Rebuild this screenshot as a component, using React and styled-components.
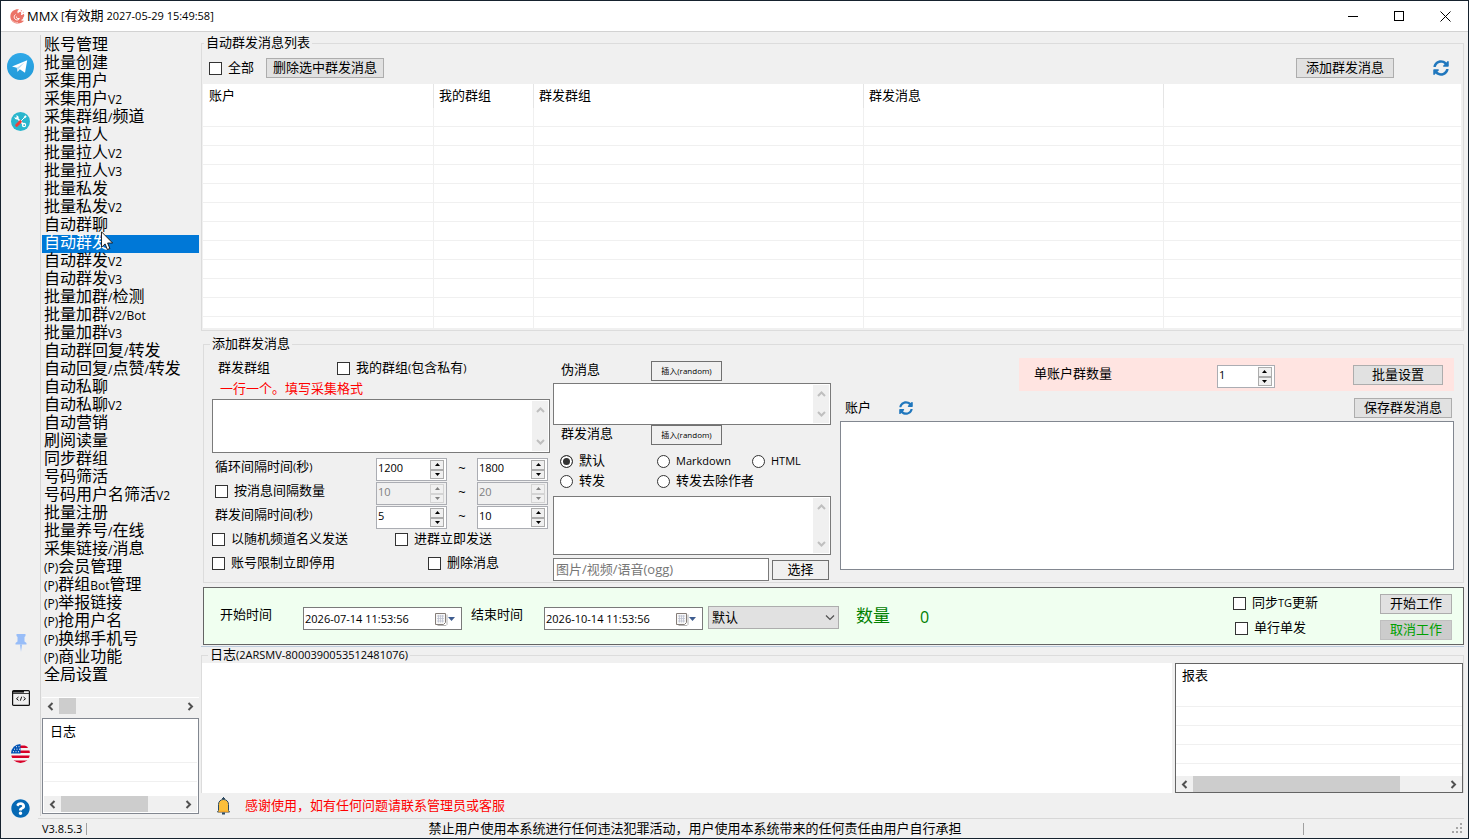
import React, { useState } from 'react';
import styled, { createGlobalStyle } from 'styled-components';
import { FaQuestionCircle, FaSyncAlt } from 'react-icons/fa';

const menu = [
  '账号管理',
  '批量创建',
  '采集用户',
  '采集用户V2',
  '采集群组/频道',
  '批量拉人',
  '批量拉人V2',
  '批量拉人V3',
  '批量私发',
  '批量私发V2',
  '自动群聊',
  '自动群发',
  '自动群发V2',
  '自动群发V3',
  '批量加群/检测',
  '批量加群V2/Bot',
  '批量加群V3',
  '自动群回复/转发',
  '自动回复/点赞/转发',
  '自动私聊',
  '自动私聊V2',
  '自动营销',
  '刷阅读量',
  '同步群组',
  '号码筛活',
  '号码用户名筛活V2',
  '批量注册',
  '批量养号/在线',
  '采集链接/消息',
  '(P)会员管理',
  '(P)群组Bot管理',
  '(P)举报链接',
  '(P)抢用户名',
  '(P)换绑手机号',
  '(P)商业功能',
  '全局设置',
];

// Latin runs are set in their own face, a little smaller than the Chinese text
function Mixed({ children }) {
  return children
    .split(/([\x20-\x7e]+)/)
    .filter(Boolean)
    .map((part, i) =>
      /^[\x20-\x7e]/.test(part) ? <Latin key={i}>{part}</Latin> : part
    );
}

function Check({ id, children, indent }) {
  return (
    <Option $indent={indent} htmlFor={id}>
      <Box type="checkbox" id={id} />
      <span>
        <Mixed>{children}</Mixed>
      </span>
    </Option>
  );
}

function Choice({ id, children, value, onChange }) {
  return (
    <Option htmlFor={id}>
      <Dot
        type="radio"
        name="mode"
        id={id}
        checked={value === id}
        onChange={() => onChange(id)}
      />
      <span>
        <Mixed>{children}</Mixed>
      </span>
    </Option>
  );
}

function Spinner({ label, value, disabled, $narrow }) {
  const [count, setCount] = useState(value);
  return (
    <SpinFrame $narrow={$narrow} $disabled={disabled}>
      <SpinInput
        type="text"
        aria-label={label}
        value={count}
        disabled={disabled}
        onChange={(e) => setCount(e.target.value)}
      />
      <SpinButtons>
        <SpinButton
          type="button"
          aria-label={`${label} +`}
          disabled={disabled}
          onClick={() => setCount(Number(count) + 1)}
        >
          <svg width="5" height="3" viewBox="0 0 5 3">
            <path d="M2.500 0L5 3H0z" fill="currentColor" />
          </svg>
        </SpinButton>
        <SpinButton
          type="button"
          aria-label={`${label} -`}
          disabled={disabled}
          onClick={() => setCount(Number(count) - 1)}
        >
          <svg width="5" height="3" viewBox="0 0 5 3">
            <path d="M0 0h5L2.500 3z" fill="currentColor" />
          </svg>
        </SpinButton>
      </SpinButtons>
    </SpinFrame>
  );
}

function Memo({ label, height }) {
  return (
    <MemoFrame $height={height}>
      <MemoInput aria-label={label} />
      <MemoBar>
        <svg width="9" height="6" viewBox="0 0 9 6" fill="none">
          <path d="M1 5l3.500-3.500L8 5" stroke="#bfbfbf" strokeWidth="2" />
        </svg>
        <svg width="9" height="6" viewBox="0 0 9 6" fill="none">
          <path d="M1 1l3.500 3.500L8 1" stroke="#bfbfbf" strokeWidth="2" />
        </svg>
      </MemoBar>
    </MemoFrame>
  );
}

function HorizontalBar({ thumb }) {
  return (
    <BarTrack>
      <BarArrow type="button" aria-label="left">
        <svg width="7" height="9" viewBox="0 0 7 9" fill="none">
          <path d="M5.500 1L2 4.500 5.500 8" stroke="#505050" strokeWidth="2" />
        </svg>
      </BarArrow>
      <BarThumb $size={thumb} />
      <BarSpace />
      <BarArrow type="button" aria-label="right">
        <svg width="7" height="9" viewBox="0 0 7 9" fill="none">
          <path d="M1.500 1L5 4.500 1.500 8" stroke="#505050" strokeWidth="2" />
        </svg>
      </BarArrow>
    </BarTrack>
  );
}

function DateField({ id, value }) {
  return (
    <DateFrame>
      <DateInput id={id} type="text" defaultValue={value} />
      <DateButton type="button" aria-label="calendar">
        <svg width="22" height="14" viewBox="0 0 22 14">
          <path d="M2.500 13.500h8.500l1-1v-10" fill="none" stroke="#b5b5b5" />
          <path d="M.5 1.500h10v9l-2 2h-8z" fill="#f7f7f7" stroke="#857d78" />
          <path
            d="M2 4h7M2 6.500h7M2 9h7M3.500 3v7.500M5.500 3v7.500M7.500 3v7.500"
            fill="none"
            stroke="#bcc1d0"
            strokeWidth=".8"
          />
          <path d="M13 5h7l-3.500 4z" fill="#3e5c8f" />
        </svg>
      </DateButton>
    </DateFrame>
  );
}

function LogoIcon() {
  return (
    <svg width="15" height="15" viewBox="0 0 15 15">
      <path
        d="M9 .5C5.500-.2 1 2 .4 6.500c-.5 4 2.400 7.500 6.400 7.900 3 .3 6-.9 7.400-2.900-1.400.4-2.600.2-3.300-.5 1.500-.3 2.500-1.200 2.300-2.600 1.300-.6 1.400-2.600.3-3.700-.7 1-1.500 1.300-2.600 1.200.5-1.200.6-2.300-.3-3.100-1 .2-2 .7-2.600 1.800C6.800 3 7.600 1.400 9 .5z"
        fill="#ec7468"
      />
      <path
        d="M5.500 5.500c-2 1.500-1.600 4.500.6 5.300 1.500.5 2.800-.1 3.200-1.400-1.800.6-3-.2-2.800-1.800"
        fill="none"
        stroke="#fff"
        strokeWidth="1"
      />
      <path d="M10.500.8l1.800.7-1 1.200zM13 2.500l1.200 1.200-1.500.3z" fill="#f3a29a" />
      <path d="M2 11.500c1.500 1.500 3.500 2.200 6 2" stroke="#f6b8b1" fill="none" />
    </svg>
  );
}

function TelegramIcon() {
  return (
    <svg width="27" height="27" viewBox="0 0 27 27">
      <defs>
        <linearGradient id="tg" x1="0" y1="0" x2="0" y2="1">
          <stop offset="0" stopColor="#2fa8e8" />
          <stop offset="1" stopColor="#239bd8" />
        </linearGradient>
      </defs>
      <circle cx="13.500" cy="13.500" r="13.500" fill="url(#tg)" />
      <path d="M5 13.400L20.200 7.300 18 19.700l-5.200-3.500-2.300 2.600-.7-4.100z" fill="#fff" />
      <path d="M9.800 14.700l7.700-5.100-5.700 6.100-1.300 3.100z" fill="#b9dcf2" />
    </svg>
  );
}

function ToolsIcon() {
  return (
    <svg width="19" height="19" viewBox="0 0 19 19">
      <circle cx="9.500" cy="9.500" r="9.500" fill="#29b6cd" />
      <path d="M6 6l6.500 6.500" stroke="#fff" strokeWidth="1.600" />
      <circle cx="5.600" cy="5.600" r="2" fill="#fff" />
      <path d="M3 3l2.400 2.400" stroke="#29b6cd" strokeWidth="1.500" />
      <circle cx="13" cy="13" r="2.200" fill="#fff" />
      <circle cx="13.200" cy="13.200" r=".9" fill="#29b6cd" />
      <path d="M10 9l4-4" stroke="#fff" strokeWidth="1" />
      <path d="M13.200 5.800l1.800-2" stroke="#fff" strokeWidth="1.800" />
      <path d="M9.300 9.700l-3.600 3.600" stroke="#ee3f3a" strokeWidth="3" strokeLinecap="round" />
    </svg>
  );
}

function PinIcon() {
  return (
    <svg width="12" height="18" viewBox="0 0 12 18">
      <path d="M1.500 0h9v2L9.500 3v4.500L11.500 9v1.500H.5V9L2.500 7.500V3l-1-1z" fill="#98bdf8" />
      <path d="M5 10.500h2L6 18z" fill="#98bdf8" />
    </svg>
  );
}

function CodeIcon() {
  return (
    <svg width="18" height="16" viewBox="0 0 18 16" fill="none" stroke="#111">
      <rect x=".6" y=".6" width="16.800" height="14.800" rx="1" strokeWidth="1.200" />
      <path d="M1 1.800h11" strokeWidth="1.600" />
      <path d="M1 3.500h16" strokeWidth=".8" />
      <path d="M6.500 7L4.500 8.700l2 1.700M11.500 7l2 1.700-2 1.700M9.700 6.700l-1.400 4" />
    </svg>
  );
}

function FlagIcon() {
  return (
    <svg width="19" height="19" viewBox="0 0 19 19">
      <defs>
        <clipPath id="round">
          <circle cx="9.500" cy="9.500" r="9.500" />
        </clipPath>
      </defs>
      <g clipPath="url(#round)">
        <path fill="#f4f4f4" d="M0 0h19v19H0z" />
        <path
          fill="#d80027"
          d="M9 1.500h10V4H9zM9 6.500h10V9H9zM0 11.500h19V14H0zM0 16.500h19V19H0z"
        />
        <path fill="#0052b4" d="M0 0h9.500v9.500H0z" />
        <path
          d="M2 7.700h1M4.500 7.700h1M7 7.700h1M3 5.200h1M5.500 5.200h1M8 5.200h1M5 2.700h1M7.500 2.700h1"
          stroke="#f4f4f4"
        />
      </g>
    </svg>
  );
}

function BellIcon() {
  return (
    <svg width="13" height="18" viewBox="0 0 13 18">
      <path d="M5 1.500h3M6.500 0v3" stroke="#2c4a63" />
      <path
        d="M1.500 13.500V7.500c0-3 2-5 5-5s5 2 5 5v6l1 1.500H.5z"
        fill="#fbbf3a"
        stroke="#2c4a63"
      />
      <path d="M1.500 14.500h10" stroke="#f0a52b" strokeWidth="1.500" />
      <path d="M5 16.500h3" stroke="#2c4a63" strokeWidth="2" />
    </svg>
  );
}

function Pointer() {
  return (
    <PointerSvg width="13" height="20" viewBox="0 0 13 20">
      <path
        d="M.5.800v15.500l3.600-3.400 2.300 5.600 2.500-1-2.300-5.500h5z"
        fill="#fff"
        stroke="#111"
        strokeWidth=".9"
      />
    </PointerSvg>
  );
}

export default function App() {
  const [active, setActive] = useState('自动群发');
  const [mode, setMode] = useState('default');

  return (
    <Window>
      <GlobalStyle />
      <TitleBar>
        <LogoIcon />
        <Brand>MMX</Brand>
        <span>
          <Mixed>[有效期 2027-05-29 15:49:58]</Mixed>
        </span>
        <WindowButtons>
          <WindowButton type="button" aria-label="minimize">
            <svg width="11" height="11" viewBox="0 0 11 11">
              <path d="M0 5.500h10" stroke="#000" />
            </svg>
          </WindowButton>
          <WindowButton type="button" aria-label="maximize">
            <svg width="11" height="11" viewBox="0 0 11 11">
              <rect x=".5" y=".5" width="9" height="9" fill="none" stroke="#000" />
            </svg>
          </WindowButton>
          <WindowButton type="button" aria-label="close">
            <svg width="11" height="11" viewBox="0 0 11 11">
              <path d="M.5.500l10 10M10.500.500l-10 10" stroke="#000" />
            </svg>
          </WindowButton>
        </WindowButtons>
      </TitleBar>

      <Body>
        <Rail>
          <RailGroup>
            <RailButton type="button" aria-label="telegram">
              <TelegramIcon />
            </RailButton>
            <RailButton type="button" aria-label="tools">
              <ToolsIcon />
            </RailButton>
          </RailGroup>
          <RailGroup>
            <RailButton type="button" aria-label="pin">
              <PinIcon />
            </RailButton>
            <RailButton type="button" aria-label="console">
              <CodeIcon />
            </RailButton>
            <RailButton type="button" aria-label="language">
              <FlagIcon />
            </RailButton>
            <RailButton type="button" aria-label="help">
              <HelpBadge>
                <FaQuestionCircle size={19} />
              </HelpBadge>
            </RailButton>
          </RailGroup>
        </Rail>

        <Sidebar>
          <MenuList>
            {menu.map((item) => (
              <MenuItem key={item}>
                <MenuLink
                  href="#"
                  $active={item === active}
                  onClick={() => setActive(item)}
                >
                  <Mixed>{item}</Mixed>
                </MenuLink>
                {item === '自动群发' && <Pointer />}
              </MenuItem>
            ))}
          </MenuList>
          <MenuScroll>
            <HorizontalBar thumb={17} />
          </MenuScroll>
          <SideLog>
            <Grid>
              <thead>
                <tr>
                  <HeadCell>日志</HeadCell>
                </tr>
              </thead>
              <tbody>
                {[0, 1].map((row) => (
                  <tr key={row}>
                    <Cell />
                  </tr>
                ))}
              </tbody>
            </Grid>
            <HorizontalBar thumb={87} />
          </SideLog>
        </Sidebar>

        <Main>
          <ListGroup>
            <Legend>自动群发消息列表</Legend>
            <Toolbar>
              <Check id="all">全部</Check>
              <DeleteButton type="button">删除选中群发消息</DeleteButton>
              <ToolbarEnd>
                <Button type="button">添加群发消息</Button>
                <IconButton type="button" aria-label="refresh list">
                  <FaSyncAlt size={16} color="#2077bd" />
                </IconButton>
              </ToolbarEnd>
            </Toolbar>
            <TableArea>
              <Grid>
                <colgroup>
                  <Column $width={231} />
                  <Column $width={100} />
                  <Column $width={330} />
                  <Column $width={300} />
                  <Column />
                </colgroup>
                <thead>
                  <tr>
                    <HeadCell>账户</HeadCell>
                    <HeadCell>我的群组</HeadCell>
                    <HeadCell>群发群组</HeadCell>
                    <HeadCell>群发消息</HeadCell>
                    <HeadCell />
                  </tr>
                </thead>
                <tbody>
                  {Array.from({ length: 12 }, (_, row) => (
                    <tr key={row}>
                      <Cell />
                      <Cell />
                      <Cell />
                      <Cell />
                      <Cell />
                    </tr>
                  ))}
                </tbody>
              </Grid>
            </TableArea>
          </ListGroup>

          <FormGroup>
            <Legend>添加群发消息</Legend>
            <FormGrid>
              <Targets>
                <TargetHead>
                  <Caption>群发群组</Caption>
                  <Check id="mine">我的群组(包含私有)</Check>
                </TargetHead>
                <Hint>一行一个。填写采集格式</Hint>
                <Memo label="群发群组" height={54} />
                <Intervals>
                  <IntervalRow>
                    <Caption>
                      <Mixed>循环间隔时间(秒)</Mixed>
                    </Caption>
                    <Spinner label="循环最小" value="1200" />
                    <Tilde>~</Tilde>
                    <Spinner label="循环最大" value="1800" />
                  </IntervalRow>
                  <IntervalRow>
                    <Check id="by-message">按消息间隔数量</Check>
                    <Spinner label="数量最小" value="10" disabled />
                    <Tilde>~</Tilde>
                    <Spinner label="数量最大" value="20" disabled />
                  </IntervalRow>
                  <IntervalRow>
                    <Caption>
                      <Mixed>群发间隔时间(秒)</Mixed>
                    </Caption>
                    <Spinner label="群发最小" value="5" />
                    <Tilde>~</Tilde>
                    <Spinner label="群发最大" value="10" />
                  </IntervalRow>
                  <CheckRow $start={183}>
                    <Check id="random-channel">以随机频道名义发送</Check>
                    <Check id="on-join">进群立即发送</Check>
                  </CheckRow>
                  <CheckRow $start={216}>
                    <Check id="stop-limited">账号限制立即停用</Check>
                    <Check id="delete-message">删除消息</Check>
                  </CheckRow>
                </Intervals>
              </Targets>

              <Message>
                <MessageHead>
                  <Caption>伪消息</Caption>
                  <InsertButton type="button">插入(random)</InsertButton>
                </MessageHead>
                <MessageMemo>
                  <Memo label="伪消息" height={42} />
                </MessageMemo>
                <MessageHead>
                  <Caption>群发消息</Caption>
                  <InsertButton type="button">插入(random)</InsertButton>
                </MessageHead>
                <Modes>
                  <Choice id="default" value={mode} onChange={setMode}>
                    默认
                  </Choice>
                  <Choice id="markdown" value={mode} onChange={setMode}>
                    Markdown
                  </Choice>
                  <Choice id="html" value={mode} onChange={setMode}>
                    HTML
                  </Choice>
                  <Choice id="forward" value={mode} onChange={setMode}>
                    转发
                  </Choice>
                  <Choice id="forward-anonymous" value={mode} onChange={setMode}>
                    转发去除作者
                  </Choice>
                </Modes>
                <Memo label="群发消息" height={59} />
                <FileRow>
                  <FileInput
                    type="text"
                    aria-label="图片/视频/语音(ogg)"
                    placeholder="图片/视频/语音(ogg)"
                  />
                  <PickButton type="button">选择</PickButton>
                </FileRow>
              </Message>

              <Accounts>
                <PinkBar>
                  <span>单账户群数量</span>
                  <PinkControls>
                    <Spinner label="单账户群数量" value="1" $narrow />
                    <BatchButton type="button">批量设置</BatchButton>
                  </PinkControls>
                </PinkBar>
                <AccountHead>
                  <span>账户</span>
                  <IconButton type="button" aria-label="refresh accounts">
                    <FaSyncAlt size={14} color="#2077bd" />
                  </IconButton>
                  <SaveButton type="button">保存群发消息</SaveButton>
                </AccountHead>
                <AccountList />
              </Accounts>
            </FormGrid>
          </FormGroup>

          <Schedule>
            <Caption as="label" htmlFor="start">
              开始时间
            </Caption>
            <DateSlot>
              <DateField id="start" value="2026-07-14 11:53:56" />
            </DateSlot>
            <EndLabel htmlFor="end">结束时间</EndLabel>
            <EndSlot>
              <DateField id="end" value="2026-10-14 11:53:56" />
            </EndSlot>
            <SelectFrame>
              <Select aria-label="模式" defaultValue="默认">
                <option>默认</option>
              </Select>
              <SelectArrow width="10" height="6" viewBox="0 0 10 6" fill="none">
                <path d="M1 .5l4 4 4-4" stroke="#505050" strokeWidth="1.200" />
              </SelectArrow>
            </SelectFrame>
            <Total>数量</Total>
            <TotalCount>0</TotalCount>
            <ScheduleEnd>
              <ScheduleChecks>
                <Check id="sync">同步TG更新</Check>
                <Check id="single" indent={2}>
                  单行单发
                </Check>
              </ScheduleChecks>
              <ScheduleButtons>
                <Button type="button">开始工作</Button>
                <CancelButton type="button">取消工作</CancelButton>
              </ScheduleButtons>
            </ScheduleEnd>
          </Schedule>
          <Rule />

          <LogGroup>
            <Legend>
              <Mixed>日志(2ARSMV-8000390053512481076)</Mixed>
            </Legend>
            <LogRow>
              <LogPane />
              <Report>
                <Grid>
                  <thead>
                    <tr>
                      <HeadCell>报表</HeadCell>
                    </tr>
                  </thead>
                  <tbody>
                    {[0, 1, 2, 3].map((row) => (
                      <tr key={row}>
                        <Cell />
                      </tr>
                    ))}
                  </tbody>
                </Grid>
                <HorizontalBar thumb={207} />
              </Report>
            </LogRow>
          </LogGroup>
          <Notice>
            <BellIcon />
            <span>感谢使用，如有任何问题请联系管理员或客服</span>
          </Notice>
        </Main>
      </Body>

      <StatusBar>
        <Version>V3.8.5.3</Version>
        <Disclaimer>
          禁止用户使用本系统进行任何违法犯罪活动，用户使用本系统带来的任何责任由用户自行承担
        </Disclaimer>
        <GripArea>
          <svg width="12" height="12" viewBox="0 0 12 12">
            <path
              d="M8 0h2v2H8zM4 4h2v2H4zM8 4h2v2H8zM0 8h2v2H0zM4 8h2v2H4zM8 8h2v2H8z"
              fill="#a6a6a6"
            />
          </svg>
        </GripArea>
      </StatusBar>
    </Window>
  );
}

const GlobalStyle = createGlobalStyle`
  * {
    box-sizing: border-box;
  }
  body {
    margin: 0;
    background: #f0f0f0;
    color: #000;
    font-family: 'Liberation Sans', 'Noto Sans CJK SC', sans-serif;
    font-size: 13px;
    line-height: 18px;
  }
  button, input, textarea, select {
    margin: 0;
    padding: 0;
    color: inherit;
    font: inherit;
  }
  svg {
    display: block;
    flex: none;
  }
`;
const Latin = styled.span`
  font-family: 'Open Sans', 'Noto Sans', sans-serif;
  font-size: 11px;
  line-height: 1;
`;
const Window = styled.div`
  display: flex;
  flex-direction: column;
  min-width: 1280px;
  min-height: 100vh;
  border: 1px solid #16222e;
  background: #f0f0f0;
`;

const TitleBar = styled.header`
  display: flex;
  align-items: center;
  height: 31px;
  padding-left: 9px;
  border-bottom: 1px solid #d2d2d2;
  background: #fff;
`;
const Brand = styled.span`
  margin: 0 3px 0 2px;
  font-family: 'Open Sans', sans-serif;
`;
const WindowButtons = styled.div`
  display: flex;
  margin-left: auto;
`;
const WindowButton = styled.button`
  display: flex;
  align-items: center;
  justify-content: center;
  width: 46px;
  height: 30px;
  border: 0;
  background: none;
`;

const Body = styled.div`
  display: flex;
  flex: 1;
`;
const Rail = styled.nav`
  display: flex;
  flex-direction: column;
  justify-content: space-between;
  flex: none;
  width: 39px;
  padding-top: 24px;
`;
const RailGroup = styled.div`
  display: flex;
  flex-direction: column;
  align-items: center;
  gap: 35px;
`;
const RailButton = styled.button`
  display: flex;
  align-items: center;
  justify-content: center;
  width: 28px;
  height: 20px;
  border: 0;
  background: none;
`;
const HelpBadge = styled.span`
  border-radius: 50%;
  color: #0669b4;
  background: #fff;
`;

const Sidebar = styled.aside`
  display: flex;
  flex-direction: column;
  flex: none;
  width: 160px;
  margin: 3px 0 2px;
  padding: 2px 1px;
  border-left: 1px solid #d5d5d5;
`;
const MenuList = styled.ul`
  flex: 1;
  margin: 0;
  padding: 0;
  list-style: none;
`;
const MenuItem = styled.li`
  position: relative;
`;
const MenuLink = styled.a`
  display: block;
  height: 18px;
  padding-left: 2px;
  color: ${(props) => (props.$active ? '#fff' : '#000')};
  background: ${(props) => (props.$active ? '#0078d7' : 'none')};
  font-size: 16px;
  line-height: 16px;
  text-decoration: none;
  white-space: nowrap;

  ${Latin} {
    font-size: 12px;
  }
`;
const PointerSvg = styled.svg`
  position: absolute;
  top: -4px;
  left: 59px;
`;
const MenuScroll = styled.div`
  margin-bottom: 4px;
  border-top: 1px solid #fff;
`;
const SideLog = styled.section`
  display: flex;
  flex-direction: column;
  justify-content: space-between;
  height: 96px;
  padding: 1px;
  border: 1px solid #828790;
  background: #fff;
`;

const BarTrack = styled.div`
  display: flex;
  flex: none;
  height: 16px;
  background: #f0f0f0;
`;
const BarArrow = styled.button`
  display: flex;
  align-items: center;
  justify-content: center;
  width: 17px;
  border: 0;
  background: none;
`;
const BarThumb = styled.div`
  width: ${(props) => props.$size}px;
  background: #cdcdcd;
`;
const BarSpace = styled.div`
  flex: 1;
`;

const Grid = styled.table`
  width: 100%;
  table-layout: fixed;
  border-spacing: 0;
`;
const Column = styled.col`
  width: ${(props) => (props.$width ? `${props.$width}px` : 'auto')};
`;
const HeadCell = styled.th`
  height: 24px;
  padding: 0 5px 0 6px;
  border-right: 1px solid #e5e5e5;
  font-weight: 400;
  text-align: left;
  &:not(:first-child) {
    padding-left: 5px;
  }
  &:last-child {
    border-right: 0;
  }
`;
const Cell = styled.td`
  height: 19px;
  padding: 0;
  border-right: 1px solid #f0f0f0;
  border-bottom: 1px solid #f0f0f0;
  &:last-child {
    border-right: 0;
  }
`;

const Main = styled.main`
  display: flex;
  flex-direction: column;
  flex: 1;
  min-width: 0;
  padding: 3px 4px 0 1px;
`;
const Group = styled.fieldset`
  min-width: 0;
  margin: 0;
  padding: 0;
  border: 1px solid #dcdcdc;
`;
const Legend = styled.legend`
  margin-left: 1px;
  padding: 0 2px;
  line-height: 16px;
`;
const ListGroup = styled(Group)`
  padding: 0 1px 2px;
`;
const FormGroup = styled(Group)`
  margin: 5px 0 0 2px;
  padding: 1px 9px 1px 8px;

  ${Legend} {
    margin-left: -2px;
  }
`;
const LogGroup = styled(Group)`
  display: flex;
  flex-direction: column;
  flex: 1;
  border-bottom: 0;

  ${Legend} {
    margin-left: 6px;
  }
`;

const Option = styled.label`
  display: flex;
  align-items: center;
  gap: 6px;
  margin-left: ${(props) => props.$indent || 0}px;
  white-space: nowrap;
`;
const Box = styled.input`
  appearance: none;
  flex: none;
  width: 13px;
  height: 13px;
  border: 1px solid #333;
  background: #fff;
  &:checked {
    box-shadow: inset 0 0 0 2px #fff;
    background: #333;
  }
`;
const Dot = styled(Box)`
  border-radius: 50%;
`;
const Button = styled.button`
  height: 20px;
  padding: 0 9px;
  border: 1px solid #adadad;
  background: #e1e1e1;
  line-height: 18px;
  white-space: nowrap;
`;
const DeleteButton = styled(Button)`
  padding: 0 6px;
`;
const IconButton = styled.button`
  display: flex;
  align-items: center;
  border: 0;
  background: none;
`;

const Toolbar = styled.div`
  display: flex;
  align-items: center;
  gap: 12px;
  height: 33px;
  padding: 1px 0 0 6px;
`;
const ToolbarEnd = styled.div`
  display: flex;
  gap: 39px;
  margin-left: auto;
  padding-right: 13px;
`;
const TableArea = styled.div`
  height: 244px;
  margin-right: 1px;
  overflow: hidden;
  background: #fff;
`;

const FormGrid = styled.div`
  display: grid;
  grid-template-columns: 338px 278px 1fr;
`;
const Caption = styled.span`
  white-space: nowrap;
`;
const Targets = styled.div`
  padding-top: 6px;
`;
const TargetHead = styled.div`
  display: grid;
  grid-template-columns: 119px 1fr;
  padding-left: 6px;
`;
const Hint = styled.div`
  margin: 3px 0 1px;
  padding-left: 8px;
  color: #f00;
`;
const MemoFrame = styled.div`
  display: flex;
  height: ${(props) => props.$height}px;
  padding: 1px;
  border: 1px solid #7a7a7a;
  background: #fff;
`;
const MemoInput = styled.textarea`
  flex: 1;
  min-width: 0;
  border: 0;
  outline: 0;
  resize: none;
  background: none;
`;
const MemoBar = styled.div`
  display: flex;
  flex-direction: column;
  align-items: center;
  justify-content: space-between;
  width: 16px;
  padding: 6px 0;
  background: #f0f0f0;
`;
const Intervals = styled.div`
  padding-top: 5px;
`;
const IntervalRow = styled.div`
  display: grid;
  grid-template-columns: 161px 71px 30px 71px;
  align-items: start;
  height: 24px;
  padding-left: 3px;
`;
const CheckRow = styled.div`
  display: grid;
  grid-template-columns: ${(props) => props.$start}px 1fr;
  align-items: start;
  height: 24px;
`;
const Tilde = styled.span`
  font-family: 'Open Sans', sans-serif;
  line-height: 20px;
  text-align: center;
`;
const SpinFrame = styled.div`
  display: flex;
  width: ${(props) => (props.$narrow ? 58 : 71)}px;
  height: 23px;
  padding: 1px;
  border: 1px solid #abadb3;
  color: ${(props) => (props.$disabled ? '#808080' : '#000')};
  background: ${(props) => (props.$disabled ? '#f0f0f0' : '#fff')};
`;
const SpinInput = styled.input`
  flex: 1;
  min-width: 0;
  height: 15px;
  border: 0;
  outline: 0;
  background: none;
  font-family: 'Open Sans', sans-serif;
  font-size: 11px;
`;
const SpinButtons = styled.div`
  display: flex;
  flex-direction: column;
  width: 14px;
  margin-right: 1px;
`;
const SpinButton = styled.button`
  display: flex;
  flex: 1;
  align-items: center;
  justify-content: center;
  border: 1px solid #acacac;
  background: #f0f0f0;
  &:disabled {
    border-color: #d4d4d4;
  }
`;

const Message = styled.div`
  display: flex;
  flex-direction: column;
  margin: 0 -3px 0 3px;
  padding-top: 8px;
`;
const MessageHead = styled.div`
  display: grid;
  grid-template-columns: 90px 71px;
  height: 20px;
  padding-left: 8px;
`;
const InsertButton = styled.button`
  height: 20px;
  border: 1px solid #707070;
  background: #f0f0f0;
  font-family: 'Open Sans', 'Noto Sans CJK SC', sans-serif;
  font-size: 8px;
`;
const MessageMemo = styled.div`
  padding-top: 2px;
`;
const Modes = styled.div`
  display: grid;
  grid-template-columns: 97px 95px 1fr;
  grid-auto-rows: 20px;
  padding: 6px 0 5px 7px;
`;
const FileRow = styled.div`
  display: grid;
  grid-template-columns: 1fr 57px;
  align-items: center;
  gap: 3px;
  padding: 3px 2px 0 0;
`;
const FileInput = styled.input`
  min-width: 0;
  height: 23px;
  padding: 0 2px 2px;
  border: 1px solid #7a7a7a;
  background: #fff;
  font-family: 'Open Sans', 'Noto Sans CJK SC', sans-serif;
  &::placeholder {
    color: #767676;
  }
`;
const PickButton = styled(Button)`
  border-color: #707070;
  background: #f0f0f0;
`;

const Accounts = styled.div`
  min-width: 0;
  padding: 5px 0 0 12px;
`;
const PinkBar = styled.div`
  display: flex;
  justify-content: space-between;
  width: 435px;
  height: 33px;
  margin-left: auto;
  padding: 7px 11px 0 15px;
  background: #ffe4e1;
`;
const PinkControls = styled.div`
  display: flex;
  gap: 78px;
`;
const BatchButton = styled(Button)`
  padding: 0 18px;
`;
const AccountHead = styled.div`
  display: flex;
  align-items: center;
  gap: 28px;
  margin: 7px 2px 3px 5px;
`;
const SaveButton = styled(Button)`
  margin-left: auto;
`;
const AccountList = styled.div`
  height: 149px;
  border: 1px solid #828790;
  background: #fff;
`;

const Schedule = styled.section`
  display: flex;
  align-items: flex-start;
  height: 58px;
  margin: 4px 0 0 2px;
  padding: 18px 11px 0 16px;
  border: 1px solid #646464;
  background: #f0fff0;
`;
const DateSlot = styled.div`
  margin: 1px 9px 0 31px;
`;
const EndLabel = styled.label`
  white-space: nowrap;
`;
const EndSlot = styled.div`
  margin: 1px 5px 0 21px;
`;
const DateFrame = styled.div`
  display: flex;
  width: 159px;
  height: 23px;
  padding: 1px;
  border: 1px solid #7a7a7a;
  background: #fff;
`;
const DateInput = styled.input`
  flex: 1;
  min-width: 0;
  border: 0;
  outline: 0;
  font-family: 'Open Sans', sans-serif;
  font-size: 11px;
`;
const DateButton = styled.button`
  display: flex;
  align-items: center;
  width: 25px;
  border: 0;
  background: none;
`;
const SelectFrame = styled.div`
  display: grid;
  align-items: center;
  width: 131px;
  height: 23px;
  margin-right: 17px;
`;
const Select = styled.select`
  appearance: none;
  grid-area: 1 / 1;
  width: 100%;
  height: 23px;
  padding: 0 3px;
  border: 1px solid #adadad;
  border-radius: 0;
  background: #e1e1e1;
`;
const SelectArrow = styled.svg`
  grid-area: 1 / 1;
  justify-self: end;
  margin-right: 4px;
  pointer-events: none;
`;
const Total = styled.span`
  margin-right: 30px;
  color: #008000;
  font-size: 17px;
  line-height: 22px;
`;
const TotalCount = styled(Total)`
  font-family: 'Open Sans', sans-serif;
  font-size: 16px;
`;
const ScheduleEnd = styled.div`
  display: flex;
  gap: 62px;
  margin: -12px 0 0 auto;
`;
const ScheduleChecks = styled.div`
  display: flex;
  flex-direction: column;
  gap: 7px;
`;
const ScheduleButtons = styled.div`
  display: flex;
  flex-direction: column;
  gap: 6px;
`;
const CancelButton = styled(Button)`
  border-color: #bfbfbf;
  color: #00a000;
  background: #ccc;
`;
const Rule = styled.div`
  height: 1px;
  margin-top: 1px;
  background: #bccbdc;
`;

const LogRow = styled.div`
  display: flex;
  flex: 1;
  gap: 3px;
`;
const LogPane = styled.div`
  flex: 1;
  background: #fff;
`;
const Report = styled.section`
  display: flex;
  flex-direction: column;
  justify-content: space-between;
  width: 288px;
  border: 1px solid #646464;
  background: #fff;
`;
const Notice = styled.div`
  display: flex;
  align-items: center;
  gap: 15px;
  height: 25px;
  padding-left: 16px;
  color: #f00;
`;

const StatusBar = styled.footer`
  display: grid;
  grid-template-columns: 45px 1fr 161px;
  align-items: center;
  height: 20px;
  margin: 0 4px 0 37px;
  padding-left: 4px;
  border-top: 1px solid #d7d7d7;
`;
const Version = styled.span`
  border-right: 1px solid #a0a0a0;
  font-family: 'Open Sans', sans-serif;
  font-size: 11px;
  line-height: 12px;
`;
const Disclaimer = styled.span`
  text-align: center;
`;
const GripArea = styled.div`
  display: flex;
  align-items: center;
  justify-content: flex-end;
  height: 12px;
  border-left: 1px solid #a0a0a0;
`;
